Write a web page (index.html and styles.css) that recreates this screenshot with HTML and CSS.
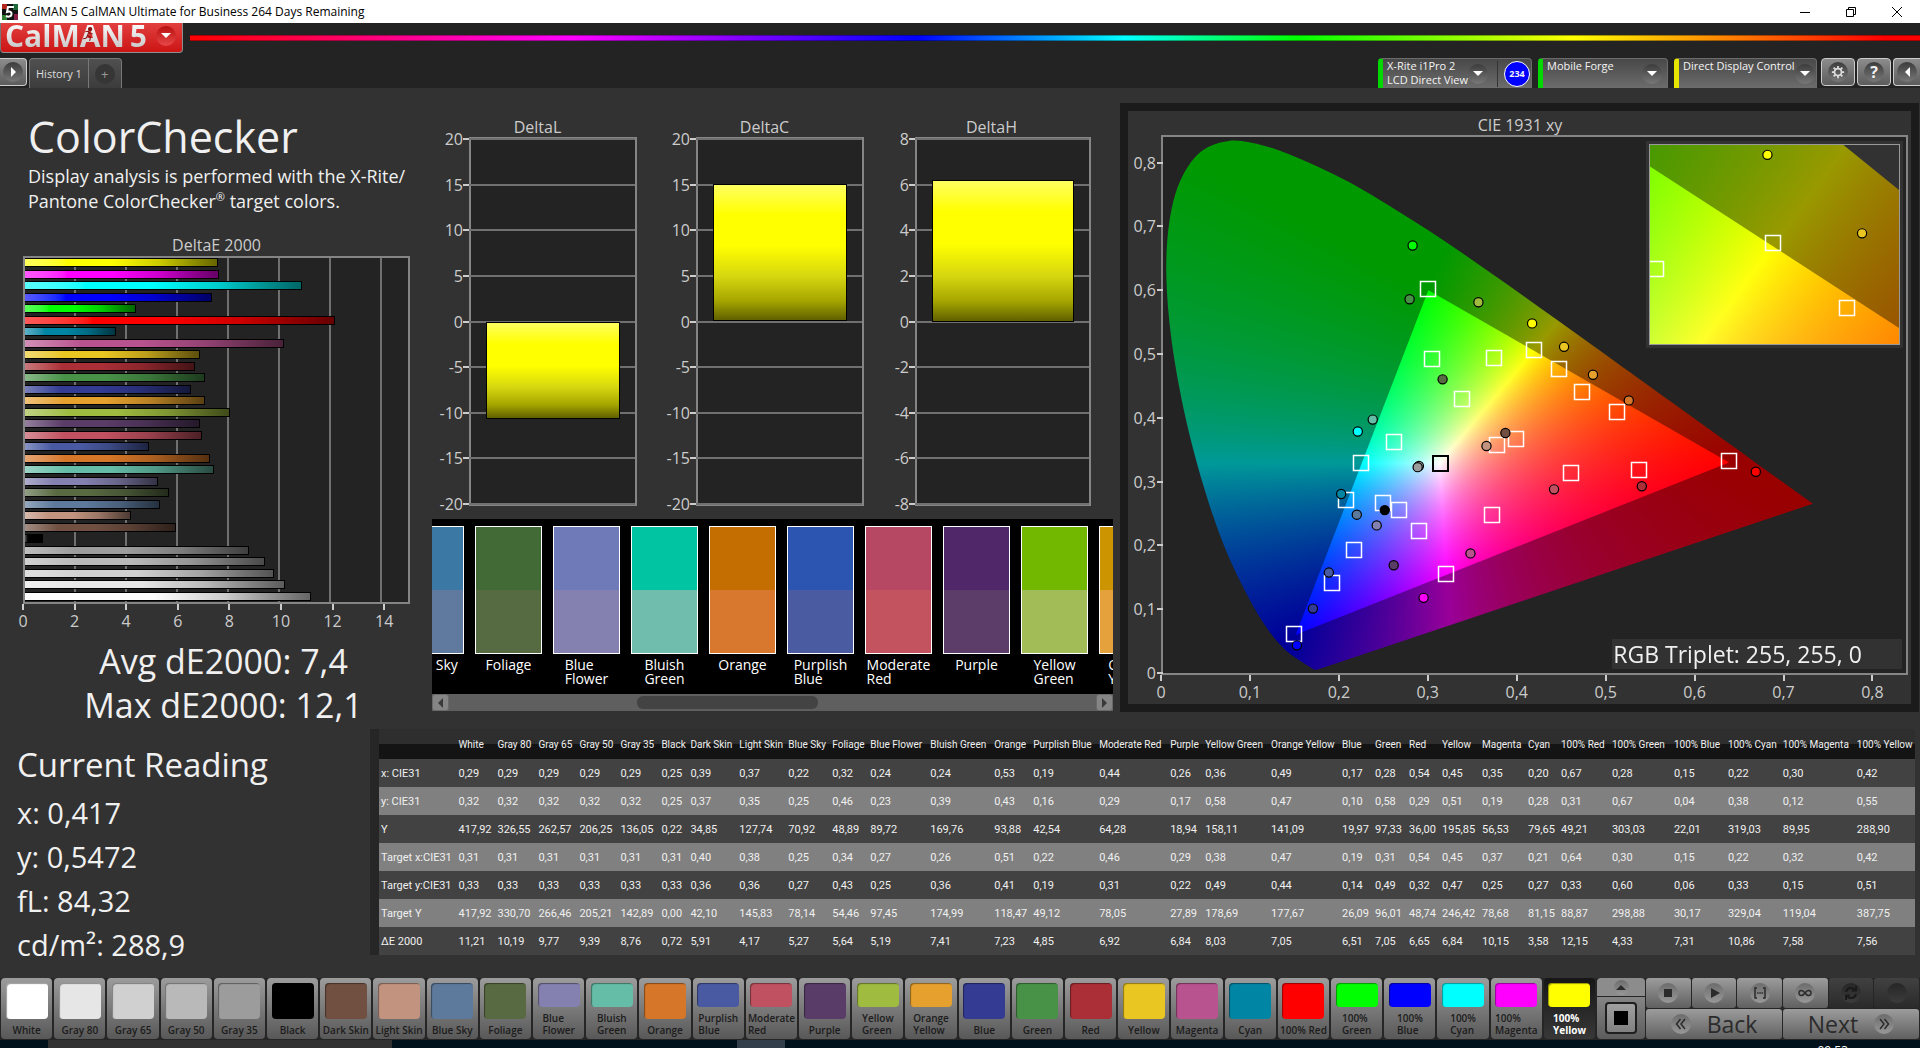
FILE: index.html
```html
<!DOCTYPE html>
<html lang="en">
<head>
    <meta charset="UTF-8">
    <meta name="viewport" content="width=device-width, initial-scale=1.0">
    <title>CalMAN 5 CalMAN Ultimate for Business</title>
    <link rel="stylesheet" href="styles.css">
</head>
<body>

<div class="titlebar">
    <svg class="app-icon" viewBox="0 0 16 16">
        <rect width="16" height="16" fill="#111"/>
        <path d="M0 0h5v5H0z" fill="#b3261e"/>
        <path d="M11 0h5v6h-5z" fill="#1e6b3a"/>
        <path d="M0 11h5v5H0z" fill="#2f7d32"/>
        <path d="M12 10h4v6h-4z" fill="#8a1c4a"/>
        <path d="M12 3H6L5 8c3-1 5 0 4.500 2.500C9 13 6 13 4 12" fill="none" stroke="#fff" stroke-width="2"/>
    </svg>
    <span class="window-title">CalMAN 5 CalMAN Ultimate for Business 264 Days Remaining</span>
    <div class="window-controls">
        <button type="button" aria-label="Minimize"><svg viewBox="0 0 10 10"><path d="M0 5.500h10"/></svg></button>
        <button type="button" aria-label="Restore"><svg viewBox="0 0 10 10"><path d="M.5 2.500h7v7h-7zM2.500 2.500v-2h7v7h-2"/></svg></button>
        <button type="button" aria-label="Close"><svg viewBox="0 0 10 10"><path d="M0 0l10 10M10 0L0 10"/></svg></button>
    </div>
</div>

<div class="brandbar">
    <button type="button" class="logo">
        <span class="logo-text">CalMAN</span>
        <svg class="runner" viewBox="0 0 12 14"><circle cx="7.500" cy="2" r="1.500"/><path d="M3 4.500l3-.5 1.500 2L10 6.500M6.500 4.500L5 8l3 1.500-1 3.500M5 8.500L3.500 10.500 1 11"/></svg>
        <span class="logo-text">5</span>
        <span class="round logo-arrow"><i class="down"></i></span>
    </button>
    <div class="rainbow"></div>
</div>

<div class="tabbar">
    <button type="button" class="icon-btn play-btn" aria-label="Open panel"><span class="round"><i class="right"></i></span></button>
    <div class="tabs">
        <button type="button" class="tab">History 1</button>
        <button type="button" class="tab tab-add" aria-label="Add tab"><span>+</span></button>
    </div>
    <div class="devices">
        <button type="button" class="device meter">
            <span class="device-name">X-Rite i1Pro 2<br>LCD Direct View</span>
            <span class="round"><i class="down"></i></span>
            <span class="counter"><b>234</b></span>
        </button>
        <button type="button" class="device source">
            <span class="device-name">Mobile Forge</span>
            <span class="round"><i class="down"></i></span>
        </button>
        <button type="button" class="device display">
            <span class="device-name">Direct Display Control</span>
            <span class="round"><i class="down"></i></span>
        </button>
    </div>
    <button type="button" class="icon-btn" aria-label="Settings"><span class="round">
        <svg class="gear" viewBox="0 0 16 16"><circle cx="8" cy="8" r="4"/><path d="M8 1v3M8 12v3M1 8h3M12 8h3M3 3l2 2M11 11l2 2M13 3l-2 2M5 11l-2 2"/></svg>
    </span></button>
    <button type="button" class="icon-btn help" aria-label="Help"><span class="round">?</span></button>
    <button type="button" class="icon-btn collapse" aria-label="Collapse"><span class="round"><i class="left"></i></span></button>
</div>

<main>
    <div class="top-row">
        <section class="summary">
            <h1>ColorChecker</h1>
            <p class="intro">Display analysis is performed with the X-Rite/<br>Pantone ColorChecker<sup>®</sup> target colors.</p>
            <div class="chart-title">DeltaE 2000</div>
            <div class="plot de-plot" id="dePlot"></div>
            <div class="x-axis" id="deAxis"></div>
            <div class="stat">Avg dE2000: 7,4</div>
            <div class="stat">Max dE2000: 12,1</div>
        </section>

        <section class="middle">
            <div class="deltas" id="deltas"></div>
            <div class="compare">
                <div class="compare-list" id="compareList"></div>
                <div class="scrollbar">
                    <button type="button" aria-label="Scroll left"><i class="left"></i></button>
                    <div class="track"><div class="thumb"></div></div>
                    <button type="button" aria-label="Scroll right"><i class="right"></i></button>
                </div>
            </div>
        </section>

        <section class="cie">
            <div class="chart-title">CIE 1931 xy</div>
            <div class="cie-plot" id="ciePlot">
                <canvas id="cieCanvas"></canvas>
                <div class="inset"><canvas id="insetCanvas"></canvas></div>
                <div class="triplet">RGB Triplet: 255, 255, 0</div>
            </div>
            <div class="x-axis" id="cieAxis"></div>
        </section>
    </div>

    <div class="bottom-row">
        <section class="reading">
            <h2>Current Reading</h2>
            <p>x: 0,417</p>
            <p>y: 0,5472</p>
            <p>fL: 84,32</p>
            <p>cd/m²: 288,9</p>
        </section>
        <div class="table-wrap">
            <table id="results"></table>
        </div>
    </div>
</main>

<footer class="patchbar">
    <div class="patches" id="patches"></div>
    <div class="pattern">
        <button type="button" class="pattern-up" aria-label="Pattern options"><span class="round"><i class="up"></i></span></button>
        <button type="button" class="pattern-window" aria-label="Window pattern"><span></span></button>
    </div>
    <div class="transport">
        <button type="button" aria-label="Stop"><span class="round"><svg viewBox="0 0 20 20"><path d="M6 6h8v8H6z"/></svg></span></button>
        <button type="button" aria-label="Play"><span class="round"><svg viewBox="0 0 20 20"><path d="M7 5l9 5-9 5z"/></svg></span></button>
        <button type="button" aria-label="Read series"><span class="round"><svg class="line" viewBox="0 0 20 20"><path d="M7 5H5v10h2M13 5h2v10h-2M7 10h1.500M9.300 10h1.500M11.600 10h1.500"/></svg></span></button>
        <button type="button" aria-label="Continuous"><span class="round"><svg class="line" viewBox="0 0 20 20"><path d="M10 10C8 7 4 6.500 4 10s4 3 6 0 6-3.500 6 0-4 3-6 0z"/></svg></span></button>
        <button type="button" class="off" aria-label="Repeat"><span class="round"><svg class="line" viewBox="0 0 20 20"><path d="M5 9c1-5 7-5 9-2M15 3v4.500h-4M15 11c-1 5-7 5-9 2M5 17v-4.500h4" stroke-width="2"/></svg></span></button>
        <button type="button" class="off" aria-label="Unavailable"><span class="round"></span></button>
        <button type="button" class="nav"><span class="round"><svg class="line" viewBox="0 0 20 20"><path d="M9.500 5l-4 5 4 5M14 5l-4 5 4 5"/></svg></span>Back</button>
        <button type="button" class="nav">Next<span class="round"><svg class="line" viewBox="0 0 20 20"><path d="M6 5l4 5-4 5M10.500 5l4 5-4 5"/></svg></span></button>
    </div>
</footer>
<div class="taskbar"><span class="task task-search"></span><span class="task task-active"></span><span class="clock">09:53</span></div>

<script src="script.js"></script>
</body>
</html>
```
FILE: styles.css
```css
* {
    box-sizing: border-box;
}

body {
    margin: 0;
    height: 100vh;
    display: flex;
    flex-direction: column;
    overflow: hidden;
    background: #232323;
    color: #f0f0f0;
    font-family: "Open Sans", "Noto Sans", sans-serif;
    font-size: 16px;
}

button {
    font: inherit;
    color: inherit;
    border: 0;
    padding: 0;
    background: none;
}

h1, h2, p {
    margin: 0;
    font-weight: normal;
}

/* arrows */
i.down, i.up, i.left, i.right {
    display: block;
    border: 5px solid transparent;
}

i.down {
    border-top-color: #fff;
    border-bottom: 0;
}

i.up {
    border-bottom-color: #2b2b2b;
    border-top: 0;
}

i.left {
    border-right-color: #fff;
    border-left: 0;
}

i.right {
    border-left-color: #fff;
    border-right: 0;
}

.round {
    width: 20px;
    height: 20px;
    flex: none;
    display: flex;
    align-items: center;
    justify-content: center;
    border-radius: 50%;
    background: linear-gradient(#3c3c3c, #787878);
}

/* title bar */
.titlebar {
    display: flex;
    align-items: center;
    height: 23px;
    padding-left: 2px;
    background: #fff;
    color: #000;
    font-size: 12px;
}

.app-icon {
    width: 16px;
    height: 16px;
    margin-right: 5px;
}

.window-controls {
    display: flex;
    margin-left: auto;
}

.window-controls button {
    width: 46px;
    height: 22px;
    display: flex;
    align-items: center;
    justify-content: center;
}

.window-controls svg {
    width: 10px;
    height: 10px;
    fill: none;
    stroke: #000;
}

/* brand bar */
.brandbar {
    display: flex;
    height: 35px;
}

.logo {
    display: flex;
    align-items: center;
    position: relative;
    width: 183px;
    height: 30px;
    padding: 0 6px 4px 4px;
    border: 1px solid #8f8f8f;
    border-top: 0;
    border-left-color: #777;
    border-radius: 0 0 4px 4px;
    background: linear-gradient(#e24040, #cc1414);
}

.logo-text {
    margin-right: 5px;
    font-size: 30px;
    font-weight: 700;
    line-height: 28px;
    color: transparent;
    background: linear-gradient(#fff, #c4c4c4);
    background-clip: text;
    -webkit-background-clip: text;
}

/* running figure over the A */
.runner {
    position: absolute;
    left: 81px;
    top: 4px;
    width: 13px;
    height: 15px;
    fill: #8c1010;
    stroke: #8c1010;
}

.runner path {
    fill: none;
}

.logo-arrow {
    margin-left: auto;
    background: linear-gradient(#b81010, #e84848);
}

.rainbow {
    flex: 1;
    height: 6px;
    margin: 12px 0 0 7px;
    border: 1px solid rgba(0, 0, 0, .35);
    border-width: 1px 0;
    background: linear-gradient(90deg, #f00, #f0f 22%, #00f 42%, #0ff 54%, #0f0 64%, #ff0 80%, #f00 98%);
}

/* tab bar */
.tabbar {
    display: flex;
    height: 30px;
}

.icon-btn {
    width: 34px;
    height: 28px;
    flex: none;
    margin-left: 2px;
    display: flex;
    align-items: center;
    justify-content: center;
    border: 1px solid #ccc;
    border-radius: 4px;
    background: linear-gradient(#8c8c8c, #5c5c5c);
    font-size: 16px;
    font-weight: 700;
}

.play-btn {
    width: 27px;
    margin: 0;
    border-left: 0;
    border-radius: 0 4px 4px 0;
}

.collapse {
    width: 27px;
    border-right: 0;
    border-radius: 4px 0 0 4px;
}

.gear {
    width: 14px;
    height: 14px;
    fill: none;
    stroke: #ddd;
    stroke-width: 2;
}

.tabs {
    display: flex;
    margin-left: 2px;
    border: 1px solid #777;
    border-bottom: 0;
    border-radius: 4px 4px 0 0;
    background: linear-gradient(#505050, #3c3c3c);
}

.tab {
    padding: 0 6px;
    color: #ddd;
    font-size: 11px;
}

.tab-add {
    border-left: 1px solid #777;
    color: #999;
    font-size: 13px;
}

.tab-add span {
    display: block;
    width: 20px;
    line-height: 20px;
    border-radius: 50%;
    background: #363636;
}

.devices {
    display: flex;
    gap: 6px;
    margin-left: auto;
    margin-right: 2px;
}

.device {
    display: flex;
    align-items: center;
    height: 30px;
    padding-right: 5px;
    border: 1px solid #6c6c6c;
    border-bottom: 0;
    border-left: 5px solid #00d800;
    border-radius: 4px 4px 0 0;
    background: linear-gradient(#484848, #6c6c6c);
    color: #f4f4f4;
    font-size: 11px;
    line-height: 14px;
    text-align: left;
}

.device-name {
    align-self: flex-start;
    flex: 1;
    padding-left: 4px;
    white-space: nowrap;
}

.meter {
    width: 154px;
    padding-right: 1px;
}

.source {
    width: 130px;
}

.display {
    width: 143px;
    border-left-color: #e6e600;
}

.counter {
    margin-left: 9px;
    padding-left: 6px;
    border-left: 1px solid #333;
}

.counter b {
    display: block;
    width: 26px;
    height: 26px;
    border: 1px solid #fff;
    border-radius: 50%;
    background: #00f;
    font-size: 9px;
    line-height: 24px;
    text-align: center;
}

/* page */
main {
    flex: 1;
    min-height: 0;
    display: flex;
    flex-direction: column;
    background: #323232;
}

.top-row {
    flex: 1;
    min-height: 0;
    display: grid;
    grid-template-columns: 424fr 696fr 800fr;
    grid-template-rows: 100%;
}

.chart-title {
    color: #ccc;
    line-height: 20px;
    text-align: center;
}

.plot {
    position: relative;
    flex: 1;
    border: 2px solid #858585;
    background: #232323;
}

.x-axis {
    position: relative;
    height: 28px;
    color: #ccc;
}

.x-axis span {
    position: absolute;
    top: 0;
    width: 40px;
    margin-left: -20px;
    line-height: 20px;
    text-align: center;
}

.x-axis span::before {
    content: "";
    display: block;
    width: 2px;
    height: 6px;
    margin: 0 auto 1px;
    background: #ccc;
}

/* summary column */
.summary {
    display: flex;
    flex-direction: column;
    min-width: 0;
    padding: 22px 14px 1px 23px;
}

.summary h1 {
    padding-left: 5px;
    font-size: 43px;
    line-height: 54px;
}

.intro {
    padding-left: 5px;
    margin-bottom: 21px;
    font-size: 18px;
    line-height: 25px;
    white-space: nowrap;
}

.intro sup {
    font-size: 11px;
    line-height: 0;
}

.summary .chart-title {
    margin-bottom: 1px;
}

.de-plot {
    display: flex;
    flex-direction: column;
    justify-content: space-between;
    padding-bottom: 1px;
}

.de-plot .grid {
    position: absolute;
    top: 0;
    bottom: 0;
    width: 2px;
    margin-left: -2px;
    background: #707070;
}

.de-bar {
    position: relative;
    height: 9px;
    border: 1px solid #000;
    border-left: 0;
}

.summary .x-axis {
    margin-bottom: 7px;
}

.stat {
    padding-left: 14px;
    font-size: 34px;
    line-height: 44px;
    text-align: center;
}

/* delta charts and comparison strip */
.middle {
    display: flex;
    flex-direction: column;
    min-width: 0;
    padding: 29px 7px 17px 0;
}

.deltas {
    flex: 1;
    display: grid;
    grid-template-columns: 1fr 1fr 1fr;
    margin-right: 8px;
}

.delta {
    display: flex;
    flex-direction: column;
    padding: 0 14px 13px 45px;
}

.delta .chart-title {
    margin: 0 -14px 0 -45px;
}

.delta.narrow {
    padding-left: 37px;
}

.delta.narrow .chart-title {
    margin-left: -37px;
}

.delta .grid {
    position: absolute;
    left: -8px;
    right: 0;
    height: 2px;
    margin-top: -1px;
    background: linear-gradient(90deg, #ccc 6px, #707070 6px);
}

.delta .grid span {
    position: absolute;
    right: 100%;
    top: -9px;
    color: #ccc;
    line-height: 20px;
}

.delta-bar {
    position: absolute;
    left: 9%;
    right: 9%;
    border: 1px solid #000;
    background: linear-gradient(#ffff60, #ff0 22%, #ff0 45%, #d6d610 68%, #a5a500 86%, #606000);
}

.compare {
    margin-left: 8px;
    background: #000;
}

.compare-list {
    display: flex;
    gap: 11px;
    height: 175px;
    padding-top: 7px;
    overflow: hidden;
}

.compare-item {
    flex: none;
    width: 67px;
    display: flex;
    flex-direction: column;
    align-items: center;
    color: #fff;
    font-size: 14px;
    line-height: 14px;
}

/* list is scrolled so the first item is half hidden */
.compare-item:first-child {
    margin-left: -35px;
}

.pair {
    width: 100%;
    height: 128px;
    margin-bottom: 4px;
    border: 1px solid #fff;
}

.scrollbar {
    display: flex;
    height: 17px;
    background: #5f5f5f;
}

.scrollbar button {
    width: 17px;
    display: flex;
    align-items: center;
    justify-content: center;
    border: 1px solid #6a6a6a;
    border-radius: 3px;
    background: #858585;
}

.scrollbar i.left {
    border-right-color: #3a3a3a;
}

.scrollbar i.right {
    border-left-color: #3a3a3a;
}

.track {
    flex: 1;
    padding: 2px 0;
}

.thumb {
    width: 28%;
    height: 13px;
    margin-left: 29%;
    border-radius: 6px;
    background: #434343;
}

/* CIE diagram */
.cie {
    display: flex;
    flex-direction: column;
    min-width: 0;
    margin: 15px 1px 16px 0;
    padding: 4px 3px 0 33px;
    border: 8px solid #1b1b1b;
}

.cie .chart-title {
    margin-left: -29px;
}

.cie-plot {
    position: relative;
    flex: 1;
    min-height: 0;
    border: 2px solid #858585;
    background: #232323;
}

.cie-plot > canvas {
    position: absolute;
    left: 0;
    top: 0;
}

.y-label {
    position: absolute;
    right: 100%;
    display: flex;
    align-items: center;
    margin-top: -10px;
    color: #ccc;
    line-height: 20px;
}

.y-label::after {
    content: "";
    width: 6px;
    height: 2px;
    margin-left: 1px;
    background: #ccc;
}

.inset {
    position: absolute;
    top: 4px;
    right: 3px;
    width: 257px;
    height: 207px;
    padding: 3px;
    background: #323232;
}

.inset canvas {
    display: block;
    border: 1px solid #999;
}

.triplet {
    position: absolute;
    right: 4px;
    bottom: 4px;
    width: 39%;
    padding-left: 1px;
    background: #323232;
    font-size: 23px;
    line-height: 30px;
    white-space: nowrap;
}

.cie .x-axis {
    height: 29px;
}

/* readings and table */
.bottom-row {
    display: flex;
    padding: 1px 5px 23px 17px;
}

.reading {
    width: 353px;
    flex: none;
    padding-top: 14px;
}

.reading h2 {
    font-size: 33px;
    line-height: 44px;
    margin-bottom: 4px;
}

.reading p {
    font-size: 29px;
    line-height: 44px;
}

.reading p:last-child {
    margin-bottom: -16px;
}

.table-wrap {
    flex: 1;
    min-width: 0;
}

table {
    width: 100%;
    table-layout: fixed;
    border-collapse: collapse;
    border-left: 9px solid #262626;
    font-family: Roboto, "Liberation Sans", sans-serif;
    font-size: 11px;
}

thead tr {
    height: 30px;
    background: linear-gradient(#2e2e2e 50%, #141414 50%);
    font-size: 10px;
}

tbody tr {
    height: 28px;
    background: #424242;
}

tbody tr:nth-child(even) {
    background: #808080;
}

th, td {
    padding: 0 0 0 2px;
    font-weight: normal;
    text-align: left;
    white-space: nowrap;
}

/* patch buttons */
.patchbar {
    display: flex;
    height: 62px;
    padding: 0 1px 1px;
    background: #262626;
}

.patches {
    flex: 1;
    display: flex;
    gap: 2px;
}

.patch {
    flex: 1 1 0;
    min-width: 0;
    display: flex;
    flex-direction: column;
    align-items: center;
    padding: 5px 0 3px;
    border-radius: 4px;
    background: linear-gradient(#9c9c9c, #585858);
    color: #1c1c1c;
    font-size: 10px;
    font-weight: 600;
    line-height: 12px;
    text-align: left;
    white-space: nowrap;
}

.patch .chip {
    flex: 1;
    width: 42px;
    margin-bottom: 5px;
    border-radius: 4px;
    box-shadow: inset 1px 1px 1px rgba(0, 0, 0, .4);
}

.patch.selected {
    background: linear-gradient(#161616, #383838);
    color: #fff;
    font-weight: 700;
}

.pattern {
    width: 48px;
    margin-left: 2px;
    display: flex;
    flex-direction: column;
    gap: 1px;
}

.pattern button {
    display: flex;
    align-items: center;
    justify-content: center;
    background: linear-gradient(#999, #6c6c6c);
}

.pattern .pattern-up {
    height: 18px;
    border-radius: 4px 4px 0 0;
    background: #8c8c8c;
}

.pattern-up .round {
    width: 15px;
    height: 15px;
}

.pattern .pattern-window {
    flex: 1;
    border-radius: 0 0 4px 4px;
    background: linear-gradient(#858585, #5c5c5c);
}

.pattern-window span {
    width: 32px;
    height: 32px;
    border: 2px solid #1e1e1e;
    border-radius: 4px;
    background: linear-gradient(#000, #000) center / 14px 14px no-repeat, linear-gradient(#a0a0a0, #808080);
}

.transport {
    width: 273px;
    margin-left: 1px;
    display: grid;
    grid-template-columns: repeat(6, 1fr);
    grid-template-rows: 1fr 1fr;
    gap: 1px;
}

.transport button {
    display: flex;
    align-items: center;
    justify-content: center;
    border-radius: 3px;
    background: linear-gradient(#9c9c9c, #606060);
    color: #2b2b2b;
}

.transport .off {
    background: linear-gradient(#414141, #2a2a2a);
}

.transport .nav {
    grid-column: span 3;
    gap: 16px;
    font-size: 23px;
    line-height: 28px;
}

.pattern .round,
.transport .round {
    background: linear-gradient(#6c6c6c, #989898);
}

.transport .off .round {
    background: linear-gradient(#262626, #3c3c3c);
}

.transport svg {
    width: 20px;
    height: 20px;
    fill: #2b2b2b;
}

.transport svg.line {
    fill: none;
    stroke: #2b2b2b;
    stroke-width: 1.5;
}

.transport .off svg.line {
    stroke: #1a1a1a;
}

/* top edge of the system taskbar */
.taskbar {
    display: flex;
    height: 8px;
    overflow: hidden;
    background: #02121c;
}

.task-search {
    width: 344px;
    margin-left: 48px;
    background: #323232;
}

.task-active {
    width: 48px;
    margin-left: 345px;
    background: #33404c;
}

.clock {
    margin: 3px 4px 0 auto;
    padding-right: 68px;
    color: #fff;
    font-size: 12px;
    line-height: 16px;
}
```
FILE: script.js
```javascript
// name, color, col width, x, y, Y, target x, target y, target Y, dE
const patches = [
    ['White', '#ffffff', 39, '0,29', '0,32', '417,92', '0,31', '0,33', '417,92', '11,21'],
    ['Gray 80', '#e6e6e6', 41, '0,29', '0,32', '326,55', '0,31', '0,33', '330,70', '10,19'],
    ['Gray 65', '#d0d0d0', 41, '0,29', '0,32', '262,57', '0,31', '0,33', '266,46', '9,77'],
    ['Gray 50', '#b9b9b9', 41, '0,29', '0,32', '206,25', '0,31', '0,33', '205,21', '9,39'],
    ['Gray 35', '#9c9c9c', 41, '0,29', '0,32', '136,05', '0,31', '0,33', '142,89', '8,76'],
    ['Black', '#000000', 29, '0,25', '0,25', '0,22', '0,31', '0,33', '0,00', '0,72'],
    ['Dark Skin', '#715042', 49, '0,39', '0,37', '34,85', '0,40', '0,36', '42,10', '5,91'],
    ['Light Skin', '#c29480', 49, '0,37', '0,35', '127,74', '0,38', '0,36', '145,83', '4,17'],
    ['Blue Sky', '#5d799b', 44, '0,22', '0,25', '70,92', '0,25', '0,27', '78,14', '5,27'],
    ['Foliage', '#586a42', 38, '0,32', '0,46', '48,89', '0,34', '0,43', '54,46', '5,64'],
    ['Blue Flower', '#8480af', 60, '0,24', '0,23', '89,72', '0,27', '0,25', '97,45', '5,19'],
    ['Bluish Green', '#65bda7', 64, '0,24', '0,39', '169,76', '0,26', '0,36', '174,99', '7,41'],
    ['Orange', '#d67628', 39, '0,53', '0,43', '93,88', '0,51', '0,41', '118,47', '7,23'],
    ['Purplish Blue', '#495aa2', 66, '0,19', '0,16', '42,54', '0,22', '0,19', '49,12', '4,85'],
    ['Moderate Red', '#c05160', 71, '0,44', '0,29', '64,28', '0,46', '0,31', '78,05', '6,92'],
    ['Purple', '#5a3c68', 35, '0,26', '0,17', '18,94', '0,29', '0,22', '27,89', '6,84'],
    ['Yellow Green', '#9fbb40', 66, '0,36', '0,58', '158,11', '0,38', '0,49', '178,69', '8,03'],
    ['Orange Yellow', '#e5a02e', 71, '0,49', '0,47', '141,09', '0,47', '0,44', '177,67', '7,05'],
    ['Blue', '#333b93', 33, '0,17', '0,10', '19,97', '0,19', '0,14', '26,09', '6,51'],
    ['Green', '#489248', 34, '0,28', '0,58', '97,33', '0,31', '0,49', '96,01', '7,05'],
    ['Red', '#ab2f37', 33, '0,54', '0,29', '36,00', '0,54', '0,32', '48,74', '6,65'],
    ['Yellow', '#eac622', 40, '0,45', '0,51', '195,85', '0,45', '0,47', '246,42', '6,84'],
    ['Magenta', '#b8538f', 46, '0,35', '0,19', '56,53', '0,37', '0,25', '78,68', '10,15'],
    ['Cyan', '#0086a4', 33, '0,20', '0,28', '79,65', '0,21', '0,27', '81,15', '3,58'],
    ['100% Red', '#ff0000', 51, '0,67', '0,31', '49,21', '0,64', '0,33', '88,87', '12,15'],
    ['100% Green', '#00ff00', 62, '0,28', '0,67', '303,03', '0,30', '0,60', '298,88', '4,33'],
    ['100% Blue', '#0000ff', 54, '0,15', '0,04', '22,01', '0,15', '0,06', '30,17', '7,31'],
    ['100% Cyan', '#00ffff', 55, '0,22', '0,38', '319,03', '0,22', '0,33', '329,04', '10,86'],
    ['100% Magenta', '#ff00ff', 74, '0,30', '0,12', '89,95', '0,32', '0,15', '119,04', '7,58'],
    ['100% Yellow', '#ffff00', 60, '0,42', '0,55', '288,90', '0,42', '0,51', '387,75', '7,56']
];

const rowNames = ['x: CIE31', 'y: CIE31', 'Y', 'Target x:CIE31', 'Target y:CIE31', 'Target Y', 'ΔE 2000'];

// labels that break onto two lines
const twoLine = ['Blue Flower', 'Bluish Green', 'Purplish Blue', 'Moderate Red', 'Yellow Green', 'Orange Yellow',
    '100% Green', '100% Blue', '100% Cyan', '100% Magenta', '100% Yellow'];

function label(name) {
    return twoLine.includes(name) ? name.replace(' ', '<br>') : name;
}

// DeltaE bars
const deMax = 15;
let html = '';
for (let v = 2; v < deMax; v += 2) {
    html += `<div class="grid" style="left:${v / deMax * 100}%"></div>`;
}
[...patches].reverse().forEach(p => {
    const value = parseFloat(p[9].replace(',', '.'));
    const c = p[1];
    html += `<div class="de-bar" style="width:${value / deMax * 100}%;background:linear-gradient(90deg,color-mix(in srgb,${c} 65%,#fff),${c} 22%,${c} 45%,color-mix(in srgb,${c} 80%,#000) 70%,color-mix(in srgb,${c} 40%,#000))"></div>`;
});
document.getElementById('dePlot').innerHTML = html;

html = '';
for (let v = 0; v < deMax; v += 2) {
    html += `<span style="left:${v / deMax * 100}%">${v}</span>`;
}
document.getElementById('deAxis').innerHTML = html;

// DeltaL / DeltaC / DeltaH
const deltas = [
    { name: 'DeltaL', max: 20, step: 5, value: -10.7 },
    { name: 'DeltaC', max: 20, step: 5, value: 15.1 },
    { name: 'DeltaH', max: 8, step: 2, value: 6.2 }
];
document.getElementById('deltas').innerHTML = deltas.map(d => {
    const pos = v => (d.max - v) / (2 * d.max) * 100;
    let grid = '';
    for (let v = d.max; v >= -d.max; v -= d.step) {
        grid += `<div class="grid" style="top:${pos(v)}%"><span>${v}</span></div>`;
    }
    const top = pos(Math.max(d.value, 0));
    const height = Math.abs(d.value) / (2 * d.max) * 100;
    return `<div class="delta ${d.max < 10 ? 'narrow' : ''}"><div class="chart-title">${d.name}</div>
        <div class="plot">${grid}<div class="delta-bar" style="top:${top}%;height:${height}%"></div></div></div>`;
}).join('');

// measured over target colors
const compare = [
    ['Blue Sky', '#3b78a4', '#5f799f'],
    ['Foliage', '#416a36', '#576b43'],
    ['Blue Flower', '#6f7ab8', '#8480af'],
    ['Bluish Green', '#00c4a2', '#70bdad'],
    ['Orange', '#c46d00', '#d8782f'],
    ['Purplish Blue', '#2c55b2', '#4a5ba2'],
    ['Moderate Red', '#b64864', '#c2535f'],
    ['Purple', '#50286a', '#5c3c68'],
    ['Yellow Green', '#72b800', '#a2bc57'],
    ['Orange Yellow', '#cb9400', '#e5a23c']
];
document.getElementById('compareList').innerHTML = compare.map(c =>
    `<div class="compare-item"><div class="pair" style="background:linear-gradient(${c[1]} 50%,${c[2]} 50%)"></div><span>${label(c[0])}</span></div>`
).join('');

// results table
const labelWidth = 82;
const total = patches.reduce((sum, p) => sum + p[2], labelWidth);
html = `<colgroup><col style="width:${labelWidth / total * 100}%">`;
html += patches.map(p => `<col style="width:${p[2] / total * 100}%">`).join('') + '</colgroup>';
html += '<thead><tr><th></th>' + patches.map(p => `<th scope="col">${p[0]}</th>`).join('') + '</tr></thead><tbody>';
rowNames.forEach((name, i) => {
    html += `<tr><th scope="row">${name}</th>` + patches.map(p => `<td>${p[3 + i]}</td>`).join('') + '</tr>';
});
document.getElementById('results').innerHTML = html + '</tbody>';

// patch buttons
document.getElementById('patches').innerHTML = patches.map(p =>
    `<button type="button" class="patch ${p[0] === '100% Yellow' ? 'selected' : ''}"><span class="chip" style="background:${p[1]}"></span><span>${label(p[0])}</span></button>`
).join('');

// CIE 1931 diagram
const locus = [
    [.1741, .005], [.1714, .0051], [.1689, .0069], [.1644, .0109], [.1566, .0177], [.144, .0297], [.1355, .0399],
    [.1241, .0578], [.1096, .0868], [.0913, .1327], [.0687, .2007], [.0454, .295], [.0235, .4127], [.0082, .5384],
    [.0039, .6548], [.0139, .7502], [.0389, .812], [.0743, .8338], [.1142, .8262], [.1547, .8059], [.1929, .7816],
    [.2296, .7543], [.3016, .6923], [.3731, .6245], [.4441, .5547], [.5125, .4866], [.5752, .4242], [.627, .3725],
    [.6658, .334], [.6915, .3083], [.719, .2809], [.7347, .2653]
];
const gamut = [[.64, .33], [.3, .6], [.15, .06]];

const targets = [
    [.3, .602], [.3036, .492], [.3747, .4944], [.3386, .4296], [.2616, .3623], [.224, .3298], [.2067, .2716],
    [.2492, .2667], [.2664, .2553], [.2894, .2223], [.2157, .1922], [.1909, .1412], [.1484, .0619], [.3194, .1544],
    [.3724, .2481], [.378, .3575], [.3987, .3665], [.4195, .5065], [.4477, .4764], [.4737, .441], [.5131, .4091],
    [.5379, .3178], [.4613, .3136], [.6401, .3322]
];
const measured = [
    [.2822, .6699, '#00ff00'], [.2788, .5858, '#489248'], [.3566, .581, '#9fbb40'], [.3161, .4602, '#586a42'],
    [.2371, .3971, '#65bda7'], [.2202, .3785, '#00ffff'], [.2014, .2806, '#0086a4'], [.2191, .2481, '#5d799b'],
    [.2416, .2313, '#8480af'], [.2507, .2553, '#000000'], [.2893, .3244, '#b9b9b9'], [.2879, .3226, '#9c9c9c'],
    [.1875, .1574, '#495aa2'], [.2608, .1688, '#5a3c68'], [.1695, .1009, '#333b93'], [.1514, .0433, '#0000ff'],
    [.2946, .1178, '#ff00ff'], [.3476, .1874, '#b8538f'], [.3657, .3557, '#c29480'], [.3871, .3761, '#715042'],
    [.4173, .5479, '#ffff00'], [.4534, .5112, '#eac622'], [.4861, .4674, '#e5a02e'], [.5266, .4272, '#d67628'],
    [.4421, .2878, '#c05160'], [.5413, .2926, '#ab2f37'], [.6702, .3154, '#ff0000']
];

function drawCie(canvas, w, h, view) {
    canvas.width = w;
    canvas.height = h;
    const ctx = canvas.getContext('2d');
    const px = x => (x - view.x0) / (view.x1 - view.x0) * w;
    const py = y => h - (y - view.y0) / (view.y1 - view.y0) * h;

    // chromaticity colors at a given brightness
    function colors(level) {
        const off = document.createElement('canvas');
        off.width = w;
        off.height = h;
        const octx = off.getContext('2d');
        const img = octx.createImageData(w, h);
        for (let j = 0; j < h; j++) {
            const y = Math.max(view.y0 + (h - j - .5) / h * (view.y1 - view.y0), .0001);
            for (let i = 0; i < w; i++) {
                const x = view.x0 + (i + .5) / w * (view.x1 - view.x0);
                const X = x / y;
                const Z = (1 - x - y) / y;
                const r = Math.max(3.2406 * X - 1.5372 - .4986 * Z, 0);
                const g = Math.max(-.9689 * X + 1.8758 + .0415 * Z, 0);
                const b = Math.max(.0557 * X - .204 + 1.057 * Z, 0);
                const k = level / Math.max(r, g, b);
                const n = (j * w + i) * 4;
                img.data[n] = r * k;
                img.data[n + 1] = g * k;
                img.data[n + 2] = b * k;
                img.data[n + 3] = 255;
            }
        }
        octx.putImageData(img, 0, 0);
        return ctx.createPattern(off, 'no-repeat');
    }

    // smooth curve through the locus points
    ctx.beginPath();
    ctx.moveTo(px(locus[0][0]), py(locus[0][1]));
    for (let i = 0; i < locus.length - 1; i++) {
        const p0 = locus[Math.max(i - 1, 0)];
        const p1 = locus[i];
        const p2 = locus[i + 1];
        const p3 = locus[Math.min(i + 2, locus.length - 1)];
        ctx.bezierCurveTo(
            px(p1[0] + (p2[0] - p0[0]) / 6), py(p1[1] + (p2[1] - p0[1]) / 6),
            px(p2[0] - (p3[0] - p1[0]) / 6), py(p2[1] - (p3[1] - p1[1]) / 6),
            px(p2[0]), py(p2[1])
        );
    }
    ctx.closePath();
    ctx.fillStyle = colors(153);
    ctx.fill();

    ctx.beginPath();
    gamut.forEach(p => ctx.lineTo(px(p[0]), py(p[1])));
    ctx.closePath();
    ctx.fillStyle = colors(255);
    ctx.fill();

    ctx.lineWidth = 1.5;
    ctx.strokeStyle = '#fff';
    targets.forEach(p => ctx.strokeRect(Math.round(px(p[0])) - 7.5, Math.round(py(p[1])) - 7.5, 15, 15));

    // white point
    ctx.lineWidth = 2;
    ctx.strokeStyle = '#000';
    ctx.strokeRect(Math.round(px(.3127)) - 7, Math.round(py(.329)) - 7, 15, 15);

    ctx.lineWidth = 1.2;
    measured.forEach(p => {
        ctx.beginPath();
        ctx.arc(px(p[0]), py(p[1]), 4.6, 0, Math.PI * 2);
        ctx.fillStyle = p[2];
        ctx.fill();
        ctx.stroke();
    });
}

const axisMax = .84;
const ciePlot = document.getElementById('ciePlot');
drawCie(document.getElementById('cieCanvas'), ciePlot.clientWidth, ciePlot.clientHeight,
    { x0: 0, x1: axisMax, y0: 0, y1: axisMax });

const inset = document.querySelector('.inset');
drawCie(document.getElementById('insetCanvas'), inset.clientWidth - 8, inset.clientHeight - 8,
    { x0: .3725, x1: .4675, y0: .4595, y1: .5525 });

for (let i = 0; i <= 8; i++) {
    const text = i ? '0,' + i : '0';
    const pos = i / 10 / axisMax * 100;
    ciePlot.insertAdjacentHTML('beforeend', `<span class="y-label" style="top:${100 - pos}%">${text}</span>`);
    document.getElementById('cieAxis').insertAdjacentHTML('beforeend', `<span style="left:${pos}%">${text}</span>`);
}
```
